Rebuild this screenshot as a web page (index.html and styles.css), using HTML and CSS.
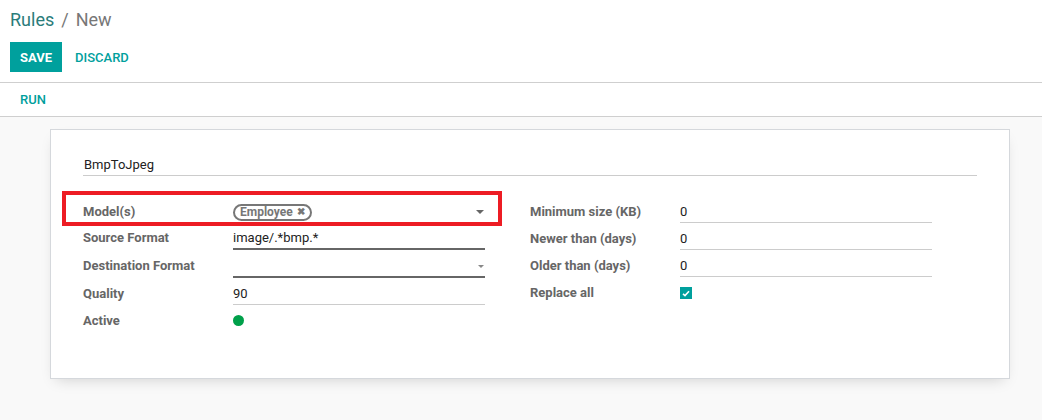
FILE: index.html
```html
<!DOCTYPE html>
<html>
<head>
<meta charset="utf-8">
<link rel="stylesheet" href="styles.css">
</head>
<body>
<div class="control-panel">
  <div class="breadcrumb"><span class="crumb-link">Rules</span><span class="crumb-sep">/</span><span class="crumb-active">New</span></div>
  <div class="buttons">
    <button class="btn btn-primary">SAVE</button>
    <button class="btn btn-link">DISCARD</button>
  </div>
</div>
<div class="statusbar">
  <button class="btn btn-link btn-run">RUN</button>
</div>
<div class="content">
  <div class="sheet">
    <div class="name-field">BmpToJpeg</div>
    <div class="groups">
      <div class="group">
        <div class="row highlighted">
          <div class="label">Model(s)</div>
          <div class="value select no-line">
            <span class="tag">Employee <span class="tag-x">&#x2716;</span></span>
            <span class="caret"></span>
          </div>
        </div>
        <div class="row">
          <div class="label">Source Format</div>
          <div class="value dark">image/.*bmp.*</div>
        </div>
        <div class="row">
          <div class="label">Destination Format</div>
          <div class="value dark select"><span></span><span class="caret small"></span></div>
        </div>
        <div class="row">
          <div class="label">Quality</div>
          <div class="value">90</div>
        </div>
        <div class="row">
          <div class="label">Active</div>
          <div class="value no-line"><span class="dot"></span></div>
        </div>
      </div>
      <div class="group">
        <div class="row">
          <div class="label">Minimum size (KB)</div>
          <div class="value">0</div>
        </div>
        <div class="row">
          <div class="label">Newer than (days)</div>
          <div class="value">0</div>
        </div>
        <div class="row">
          <div class="label">Older than (days)</div>
          <div class="value">0</div>
        </div>
        <div class="row">
          <div class="label">Replace all</div>
          <div class="value no-line"><span class="checkbox"><svg width="8" height="7" viewBox="0 0 8 7"><path d="M1 3.8 L3 5.6 L7 1.2" stroke="#fff" stroke-width="1.6" fill="none"/></svg></span></div>
        </div>
      </div>
    </div>
  </div>
</div>
</body>
</html>
```

FILE: styles.css
```css
html, body {
  margin: 0;
  padding: 0;
  height: 100%;
}
body {
  font-family: Roboto, "Noto Sans", sans-serif;
  font-size: 13px;
  color: #4c4c4c;
  background: #f9f9f9;
  display: flex;
  flex-direction: column;
}
.control-panel {
  background: #fff;
  padding: 8px 10px 10px 10px;
  border-bottom: 1px solid #cfcfcf;
}
.breadcrumb {
  font-size: 18px;
  line-height: 24px;
  height: 26px;
  margin-bottom: 8px;
}
.crumb-link { color: #2a7c7a; }
.crumb-sep { color: #777; margin: 0 7px; }
.crumb-active { color: #777; }
.buttons {
  display: flex;
  align-items: center;
  gap: 3px;
}
.btn {
  font-family: Roboto, sans-serif;
  font-size: 13px;
  border: none;
  background: none;
  height: 30px;
  padding: 0 10px;
  cursor: pointer;
}
.btn-primary {
  background: #00a09d;
  color: #fff;
  font-weight: 700;
  width: 52px;
  padding: 0;
}
.btn-link {
  color: #00a09d;
  font-weight: 500;
}
.statusbar {
  background: #fff;
  height: 33px;
  border-bottom: 1px solid #cfcfcf;
  display: flex;
  align-items: center;
  padding-left: 10px;
}
.btn-run {
  height: 33px;
}
.content {
  flex: 1;
  padding-top: 12px;
}
.sheet {
  background: #fff;
  margin-left: 50px;
  width: 960px;
  box-sizing: border-box;
  border: 1px solid #d5d8dc;
  box-shadow: 0 6px 14px -6px rgba(0, 0, 0, 0.18);
  padding: 25px 32px 45px 32px;
  height: 250px;
}
.name-field {
  font-size: 13px;
  color: #222;
  line-height: 20px;
  padding-left: 1px;
  border-bottom: 1px solid #ccc;
  margin-bottom: 26px;
}
.groups {
  display: grid;
  grid-template-columns: 1fr 1fr;
}
.group {
  display: flex;
  flex-direction: column;
  gap: 6px;
}
.row {
  display: grid;
  grid-template-columns: 150px 252px;
  align-items: start;
  position: relative;
}
.row.highlighted {
  margin-bottom: -1px;
}
.row.highlighted::before {
  content: "";
  position: absolute;
  left: -21px;
  top: -11px;
  width: 440px;
  height: 35px;
  border: 4px solid #ed1c24;
  box-sizing: border-box;
  pointer-events: none;
}
.label {
  font-weight: 700;
  color: #666;
  line-height: 20px;
}
.value {
  line-height: 20px;
  height: 20px;
  color: #222;
  border-bottom: 1px solid #ccc;
}
.value.dark {
  border-bottom: 2px solid #666;
  height: 20px;
}
.value.no-line {
  border-bottom-color: transparent;
}
.select {
  display: flex;
  align-items: center;
  justify-content: space-between;
}
.tag {
  display: inline-flex;
  align-items: center;
  height: 17px;
  box-sizing: border-box;
  border: 2px solid #777;
  border-radius: 9px;
  padding: 0 5px 0 5px;
  font-size: 12px;
  font-weight: 700;
  color: #777;
  line-height: 12px;
}
.tag-x {
  font-size: 10px;
  margin-left: 4px;
}
.caret {
  width: 0;
  height: 0;
  border-left: 4px solid transparent;
  border-right: 4px solid transparent;
  border-top: 4px solid #666;
  margin-right: 1px;
}
.caret.small {
  border-left-width: 3px;
  border-right-width: 3px;
  border-top: 3px solid #888;
  margin-right: 1px;
}
.dot {
  display: inline-block;
  width: 11px;
  height: 11px;
  border-radius: 50%;
  background: #00a04a;
  margin-top: 4px;
  vertical-align: top;
}
.checkbox {
  display: inline-flex;
  align-items: center;
  justify-content: center;
  width: 12px;
  height: 12px;
  background: #00a09d;
  margin-top: 4px;
  vertical-align: top;
}
```
